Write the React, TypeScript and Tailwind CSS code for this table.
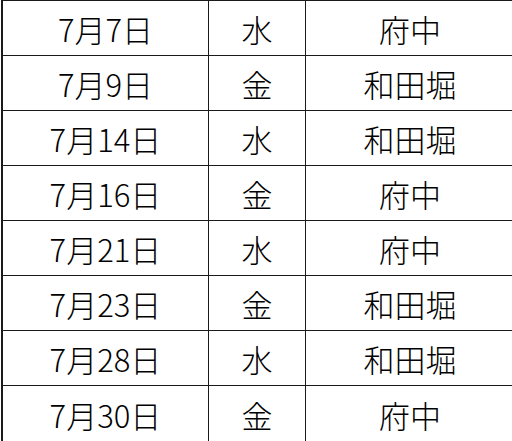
const rows = [
  { date: '7月7日', day: '水', place: '府中' },
  { date: '7月9日', day: '金', place: '和田堀' },
  { date: '7月14日', day: '水', place: '和田堀' },
  { date: '7月16日', day: '金', place: '府中' },
  { date: '7月21日', day: '水', place: '府中' },
  { date: '7月23日', day: '金', place: '和田堀' },
  { date: '7月28日', day: '水', place: '和田堀' },
  { date: '7月30日', day: '金', place: '府中' },
];

export default function App() {
  return (
    <div
      className="w-[512px] h-[441px] overflow-hidden bg-white pl-[1px]"
      style={{ fontFamily: '"Noto Sans CJK JP", "Noto Sans", sans-serif' }}
    >
      <div className="w-[520px] border-l-2 border-t border-[#1a1a1a]">
        {rows.map((r) => (
          <div
            key={r.date}
            className="grid grid-cols-[206px_97px_208px] h-[55px] border-b border-[#1a1a1a] last:border-b-0 text-[31px] font-light text-black leading-none"
          >
            <div className="flex items-center justify-center border-r border-[#1a1a1a] pt-[1px]">{r.date}</div>
            <div className="flex items-center justify-center border-r border-[#1a1a1a] pt-[1px]">{r.day}</div>
            <div className="flex items-center justify-center pt-[1px]">{r.place}</div>
          </div>
        ))}
      </div>
    </div>
  );
}
